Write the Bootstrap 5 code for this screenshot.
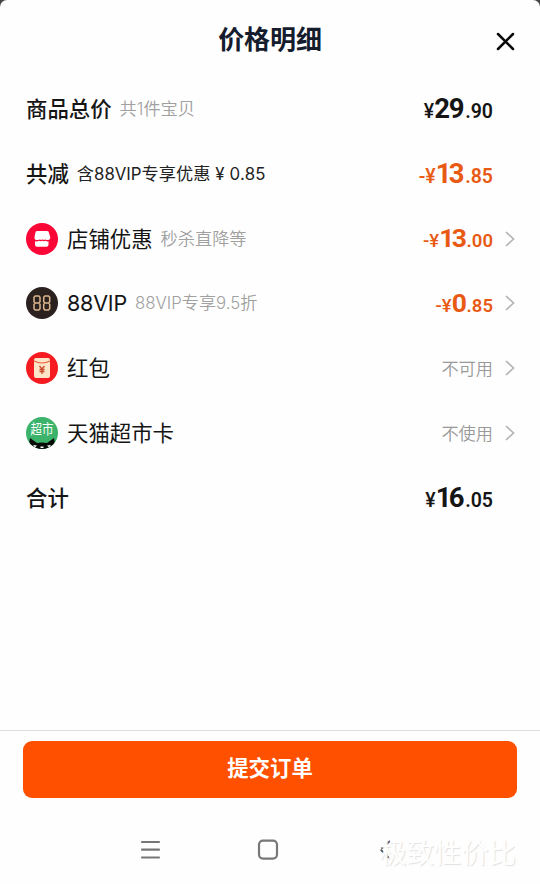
<!DOCTYPE html>
<html lang="zh-CN">
<head>
<meta charset="utf-8">
<meta name="viewport" content="width=device-width, initial-scale=1">
<title>价格明细</title>
<link href="https://cdn.jsdelivr.net/npm/bootstrap@5.3.0/dist/css/bootstrap.min.css" rel="stylesheet">
<style>
body{background:#444;font-family:"Noto Sans CJK SC",sans-serif;color:#151515;overflow:hidden}
.sheet{height:884px;background:#fefefe;border-radius:7px 7px 0 0}
.sheet-head{height:76.6px}
.sheet-title{font-size:26px;font-weight:700;color:#151c2d;line-height:76px;letter-spacing:-.1px}
.close-btn{right:25px;top:32px;width:19px;height:19px}
.line{height:64.8px;padding:0 25px 0 26px;white-space:nowrap}
.line-name{font-size:21.4px;line-height:32px;padding-bottom:2px}
.strong-name{font-weight:500}
.latin{font-family:Inter,sans-serif;letter-spacing:-.2px}
.line-name.latin{padding-bottom:0;letter-spacing:-.2px;font-size:21.5px}
.hint{font-size:17.2px;margin-left:8px;color:#a0a0a0;font-weight:350;padding-bottom:1px}
.hint-dark{color:#222;font-weight:400}
.hint .latin{font-size:16.8px;font-weight:300;letter-spacing:0}
.hint-dark .latin{font-weight:400;letter-spacing:0}
.hint-dark .amount{letter-spacing:.2px}
.round-icon{width:32px;height:32px;margin-right:9px}
.price{font-family:Roboto,sans-serif;font-size:19.5px;font-weight:500;margin-right:22px;line-height:32px;padding-top:3px}
.price b{font-size:27.5px;font-weight:700;letter-spacing:-1.3px}
.price .tight{letter-spacing:-2.7px;margin-right:1.4px}
.price i{font-style:normal;letter-spacing:0;margin-left:2px;font-weight:600}
.orange{color:#e85a14}
.linked .price,.linked .state{margin-right:12px}
.linked .price b{font-size:26.5px}
.linked .price{font-size:18.5px;padding-top:2px}
.linked .price i{margin-left:1px}
.state{font-size:17.2px;color:#999;font-weight:350;padding-bottom:1px}
.arrow{width:10px;height:16px}
.submit-bar{border-top:1px solid #dedede;padding:9.5px 23px 0;height:154px}
.submit-btn,.submit-btn:hover{height:57.5px;background:#ff5000;color:#fff;border:0;border-radius:9px;font-size:21.4px;font-weight:700;padding:0 0 5px}
.nav-keys{height:86px;padding:40px 2px 0 0}
.nav-keys svg{height:24px}
.signature{right:24px;bottom:13px;font-size:27.3px;font-weight:400;line-height:40px;color:#fff;text-shadow:1px 1px 1px #e2e2e2}
</style>
</head>
<body>
<main class="sheet d-flex flex-column position-relative">
<header class="sheet-head text-center position-relative">
<h1 class="sheet-title m-0">价格明细</h1>
<svg class="close-btn position-absolute" viewBox="0 0 19 19" stroke="#0b0b0b" stroke-width="2.5" stroke-linecap="round"><path d="M2 2l15 15M17 2L2 17"/></svg>
</header>
<section class="flex-grow-1">
<div class="line d-flex align-items-center"><span class="line-name strong-name">商品总价</span><span class="hint">共<span class="latin">1</span>件宝贝</span><span class="price ms-auto">¥<b>29</b><i>.90</i></span></div>
<div class="line d-flex align-items-center"><span class="line-name strong-name">共减</span><span class="hint hint-dark">含<span class="latin">88VIP</span>专享优惠<span class="latin amount">&nbsp;¥&nbsp;0.85</span></span><span class="price orange ms-auto">-¥<b class="tight">13</b><i>.85</i></span></div>
<div class="line linked d-flex align-items-center">
<svg class="round-icon" viewBox="0 0 32 32"><circle cx="16" cy="16" r="16" fill="#fa0637"/><path d="M11 8h10q2 0 2 2l1.200 4q.3 3-2.300 3-1.500 0-2.500-.6-1.500.9-3 0-1.500.9-3 0-1 .6-2.800.6-2.400 0-2.100-3L9.300 10Q9.500 8 11 8zM9 18.300q2.500.4 4-.5 1.500.8 3.200 0 1.700.8 3.300 0 1.500.8 3 .5v3.400q0 2-2 2H11q-2 0-2-2z" fill="#fff"/></svg>
<span class="line-name">店铺优惠</span><span class="hint">秒杀直降等</span><span class="price orange ms-auto">-¥<b class="tight">13</b><i>.00</i></span>
<svg class="arrow" viewBox="0 0 10 16" fill="none" stroke="#b5b5b5" stroke-width="1.7"><path d="M1 1l7.500 7L1 15"/></svg></div>
<div class="line linked d-flex align-items-center">
<svg class="round-icon" viewBox="0 0 32 32"><circle cx="16" cy="16" r="16" fill="#2b2220"/><g fill="none" stroke="#dcb58c" stroke-width="1.500"><path id="eight" d="M9.200 9h3.600l1.200 1.200v4.600L12.800 16H9.200L8 14.800v-4.600zM9.200 16h3.600l1.200 1.200v4.600L12.800 23H9.200L8 21.800v-4.600z"/><use href="#eight" x="9.700"/></g></svg>
<span class="line-name latin">88VIP</span><span class="hint"><span class="latin">88VIP</span>专享<span class="latin">9.5</span>折</span><span class="price orange ms-auto">-¥<b>0</b><i>.85</i></span>
<svg class="arrow" viewBox="0 0 10 16" fill="none" stroke="#b5b5b5" stroke-width="1.7"><path d="M1 1l7.500 7L1 15"/></svg></div>
<div class="line linked d-flex align-items-center">
<svg class="round-icon" viewBox="0 0 32 32"><circle cx="16" cy="16" r="16" fill="#f51b20"/><rect x="8" y="6" width="16" height="20" rx="2" fill="#fde6c8"/><path d="M8 9q8 4 16 0" fill="none" stroke="#e95a3d" stroke-width="1.200"/><path d="M13.500 14l2.500 3 2.500-3M16 17v5M13.500 17.500h5M13.500 19.500h5" fill="none" stroke="#c84c2c" stroke-width="1.300"/></svg>
<span class="line-name">红包</span><span class="state ms-auto">不可用</span>
<svg class="arrow" viewBox="0 0 10 16" fill="none" stroke="#b5b5b5" stroke-width="1.7"><path d="M1 1l7.500 7L1 15"/></svg></div>
<div class="line linked d-flex align-items-center">
<svg class="round-icon" viewBox="0 0 32 32"><defs><clipPath id="disc"><circle cx="16" cy="16" r="16"/></clipPath></defs><g clip-path="url(#disc)"><path fill="#3cb36b" d="M0 0h32v32H0z"/><path d="M4 21l7 5q5-1 10 0l7-5 2 11H2z" fill="#080c09"/><path d="M7 28l4 .5-2 2zM25 28l-4 .5 2 2zM14.500 29.500h3v1.500h-3zM0 24l4 2v6H0zM32 24l-4 2v6h4z" fill="#fff"/></g><text transform="translate(16 17) scale(1 1.18)" text-anchor="middle" font-family="Noto Sans CJK SC,sans-serif" font-size="11.500" fill="#fff">超市</text></svg>
<span class="line-name">天猫超市卡</span><span class="state ms-auto">不使用</span>
<svg class="arrow" viewBox="0 0 10 16" fill="none" stroke="#b5b5b5" stroke-width="1.7"><path d="M1 1l7.500 7L1 15"/></svg></div>
<div class="line d-flex align-items-center"><span class="line-name strong-name">合计</span><span class="price ms-auto">¥<b class="tight">16</b><i>.05</i></span></div>
</section>
<footer class="submit-bar">
<button class="submit-btn btn w-100 d-flex align-items-center justify-content-center" type="button">提交订单</button>
<nav class="nav-keys d-flex justify-content-center">
<svg width="118" viewBox="0 0 118 24" fill="none" stroke="#777" stroke-width="2.200" stroke-linecap="round"><path d="M50 4h17M50 11.700h17M50 19.500h17"/></svg>
<svg width="118" viewBox="0 0 118 24" fill="none" stroke="#777" stroke-width="2.200"><rect x="49" y="2.600" width="18" height="18" rx="4"/></svg>
<svg width="118" viewBox="0 0 118 24" fill="none" stroke="#555" stroke-width="1.800"><path d="M62 3l-9.500 8.500L62 21" stroke-dasharray="5 1.500"/></svg>
</nav>
</footer>
<div class="signature position-absolute">极致性价比</div>
</main>
<script src="https://cdn.jsdelivr.net/npm/bootstrap@5.3.0/dist/js/bootstrap.bundle.min.js"></script>
</body>
</html>
